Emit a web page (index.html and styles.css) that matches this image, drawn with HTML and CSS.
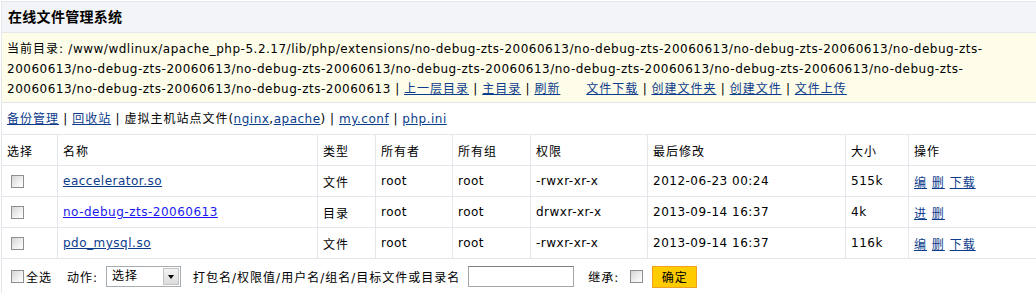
FILE: index.html
```html
<!DOCTYPE html>
<html lang="zh-CN">
<head>
    <meta charset="UTF-8">
    <title>在线文件管理系统</title>
    <link rel="stylesheet" href="styles.css">
</head>
<body>
    <div class="panel">
        <div class="title">在线文件管理系统</div>

        <div class="path">
            <span class="zh">当前目录:</span> /www/wdlinux/apache_php-5.2.17/lib/php/extensions/no-debug-zts-20060613/no-debug-zts-20060613/no-debug-zts-20060613/no-debug-zts-<br>
            20060613/no-debug-zts-20060613/no-debug-zts-20060613/no-debug-zts-20060613/no-debug-zts-20060613/no-debug-zts-20060613/no-debug-zts-<br>
            20060613/no-debug-zts-20060613/no-debug-zts-20060613 | <a href="#" class="zh">上一层目录</a> | <a href="#" class="zh">主目录</a> | <a href="#" class="zh">刷新</a>&nbsp;&nbsp;&nbsp;&nbsp;&nbsp;
            <a href="#" class="zh">文件下载</a> | <a href="#" class="zh">创建文件夹</a> | <a href="#" class="zh">创建文件</a> | <a href="#" class="zh">文件上传</a>
        </div>

        <div class="tools">
            <a href="#" class="zh">备份管理</a> | <a href="#" class="zh">回收站</a> | <span class="zh">虚拟主机站点文件</span>(<a href="#">nginx</a>,<a href="#">apache</a>) | <a href="#">my.conf</a> | <a href="#">php.ini</a>
        </div>

        <table class="files">
            <colgroup>
                <col class="c-sel">
                <col class="c-name">
                <col class="c-type">
                <col class="c-owner">
                <col class="c-group">
                <col class="c-perm">
                <col class="c-time">
                <col class="c-size">
                <col>
            </colgroup>
            <tr class="zh">
                <td>选择</td>
                <td>名称</td>
                <td>类型</td>
                <td>所有者</td>
                <td>所有组</td>
                <td>权限</td>
                <td>最后修改</td>
                <td>大小</td>
                <td>操作</td>
            </tr>
            <tr>
                <td><input type="checkbox" class="box"></td>
                <td><a href="#">eaccelerator.so</a></td>
                <td class="zh">文件</td>
                <td>root</td>
                <td>root</td>
                <td>-rwxr-xr-x</td>
                <td>2012-06-23 00:24</td>
                <td>515k</td>
                <td class="zh"><a href="#">编</a> <a href="#">删</a> <a href="#">下载</a></td>
            </tr>
            <tr>
                <td><input type="checkbox" class="box"></td>
                <td><a href="#" class="dir">no-debug-zts-20060613</a></td>
                <td class="zh">目录</td>
                <td>root</td>
                <td>root</td>
                <td>drwxr-xr-x</td>
                <td>2013-09-14 16:37</td>
                <td>4k</td>
                <td class="zh"><a href="#">进</a> <a href="#">删</a></td>
            </tr>
            <tr>
                <td><input type="checkbox" class="box"></td>
                <td><a href="#">pdo_mysql.so</a></td>
                <td class="zh">文件</td>
                <td>root</td>
                <td>root</td>
                <td>-rwxr-xr-x</td>
                <td>2013-09-14 16:37</td>
                <td>116k</td>
                <td class="zh"><a href="#">编</a> <a href="#">删</a> <a href="#">下载</a></td>
            </tr>
        </table>

        <div class="actions">
            <input type="checkbox" class="box">
            <span class="all zh">全选</span>
            <span class="act zh">动作:</span>
            <span class="select zh">选择<span class="arrow"></span></span>
            <span class="hint zh">打包名/权限值/用户名/组名/目标文件或目录名</span>
            <input type="text" class="text">
            <span class="inherit zh">继承:</span>
            <input type="checkbox" class="box keep">
            <button class="ok zh">确定</button>
        </div>
    </div>
</body>
</html>
```

FILE: styles.css
```css
* {
    margin: 0;
    padding: 0;
    box-sizing: border-box;
}
body {
    font-family: "DejaVu Sans", "Noto Sans CJK SC", sans-serif;
    font-size: 12px;
    letter-spacing: 0.5px;
    color: #000;
    background: #fff;
}
a {
    color: #0c3c8c;
}
.zh {
    letter-spacing: 1px;
}
.panel {
    margin: 1px 0 0 1px;
    border-top: 1px solid #e3e6eb;
    border-left: 1px solid #e3e6eb;
}
.title {
    height: 31px;
    line-height: 30px;
    padding-left: 6px;
    background: #f3f4f7;
    border-bottom: 1px solid #e3e6eb;
    font-size: 14px;
    font-weight: bold;
    letter-spacing: 0.3px;
}
.path {
    padding: 6px 5px 3px;
    line-height: 20px;
    background: #fefde9;
    border-bottom: 1px solid #e3e6eb;
    white-space: nowrap;
}
.tools {
    height: 32px;
    line-height: 32px;
    padding-left: 5px;
    border-bottom: 1px solid #e3e6eb;
}
.files {
    width: 100%;
    table-layout: fixed;
    border-collapse: separate;
    border-spacing: 0;
}
.files td {
    height: 31px;
    padding: 0 5px;
    border-right: 1px solid #e3e6eb;
    border-bottom: 1px solid #e3e6eb;
    white-space: nowrap;
    vertical-align: middle;
}
.files td:last-child {
    border-right: none;
}
.files .dir {
    color: #1a1aee;
}
.c-sel { width: 56px; }
.c-name { width: 260px; }
.c-type { width: 58px; }
.c-owner { width: 77px; }
.c-group { width: 78px; }
.c-perm { width: 117px; }
.c-time { width: 198px; }
.c-size { width: 63px; }

.box {
    appearance: none;
    display: block;
    width: 13px;
    height: 13px;
    margin-left: 4px;
    border: 1px solid #8e8f8f;
    background: linear-gradient(135deg, #d4d5d6 0%, #f1f1f1 60%, #fff 100%);
}
.actions {
    display: flex;
    align-items: center;
    height: 35px;
    padding-left: 5px;
}
.all {
    margin-left: 2px;
}
.act {
    margin-left: 15px;
}
.select {
    position: relative;
    display: inline-block;
    width: 75px;
    height: 21px;
    line-height: 19px;
    margin-left: 8px;
    padding-left: 5px;
    border: 1px solid #a5acb2;
    background: #fff;
}
.arrow {
    position: absolute;
    top: 1px;
    right: 1px;
    width: 16px;
    height: 17px;
    border: 1px solid #c3c3c3;
    background: linear-gradient(#f4f4f4, #dcdcdc);
}
.arrow::after {
    content: "";
    position: absolute;
    left: 4px;
    top: 6px;
    border-left: 3px solid transparent;
    border-right: 3px solid transparent;
    border-top: 4px solid #000;
}
.hint {
    margin-left: 12px;
}
.text {
    width: 106px;
    height: 21px;
    margin-left: 8px;
    border: 1px solid #a6a6a6;
    border-top-color: #7f7f7f;
}
.inherit {
    margin-left: 14px;
}
.actions .keep {
    margin-left: 11px;
}
.ok {
    width: 45px;
    height: 22px;
    margin-left: 9px;
    border: 1px solid #f0a020;
    background: #ffcc00;
    font-family: inherit;
    font-size: 12px;
    color: #000;
}
```
